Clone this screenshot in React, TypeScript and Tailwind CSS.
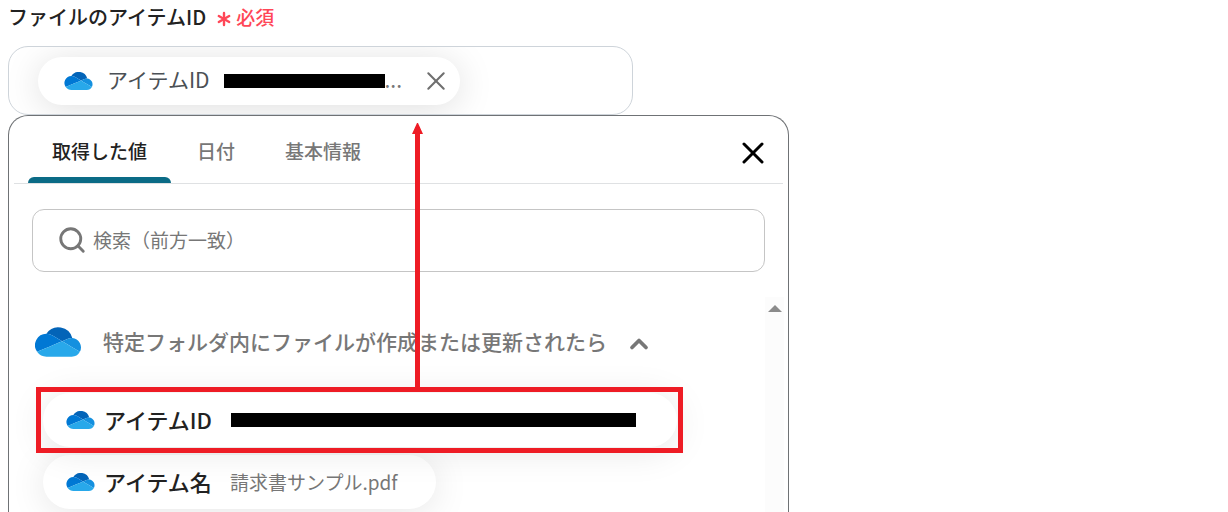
import { Asterisk, ChevronUp, Search, X } from "lucide-react";

const OneDriveIcon: React.FC<{ className: string }> = ({ className }) => (
  <svg viewBox="0 5.5 32 20.5" className={className} aria-hidden="true">
    <path fill="#0364b8" d="M12.202 11.193l6.718 4.023 4.003-1.684A6.477 6.477 0 0 1 25.5 13c.148 0 .294.007.439.016A10 10 0 0 0 7.898 10.003L8 10a7.96 7.96 0 0 1 4.202 1.193Z" />
    <path fill="#0078d4" d="M12.203 11.192A7.96 7.96 0 0 0 8 10l-.102.003A7.997 7.997 0 0 0 1.437 22.573l5.924-2.493 2.634-1.108 5.863-2.468 3.062-1.288Z" />
    <path fill="#1490df" d="M25.939 13.016A6.6 6.6 0 0 0 25.5 13a6.477 6.477 0 0 0-2.576.532l-4.004 1.684 1.161.695 3.805 2.279 1.66.994 5.677 3.4a6.5 6.5 0 0 0-5.284-9.568Z" />
    <path fill="#28a8ea" d="M25.546 19.184l-1.66-.994-3.805-2.279-1.161-.695-3.062 1.288-5.863 2.468-2.634 1.108-5.924 2.493A7.989 7.989 0 0 0 8 26h17.5a6.498 6.498 0 0 0 5.723-3.416Z" />
  </svg>
);

const tabs = [
  { label: "取得した値", active: true },
  { label: "日付", active: false },
  { label: "基本情報", active: false },
];

const SelectedChip: React.FC = () => (
  <div className="flex h-12 w-[422px] items-center rounded-full bg-white pl-[26px] pr-[13px] shadow-[0_4px_36px_rgba(0,0,0,0.13)]">
    <OneDriveIcon className="h-[18px] w-[29px] shrink-0" />
    <span className="ml-[14px] pb-[3px] text-[21px] leading-6 text-[#4b5055]">アイテムID</span>
    <span className="ml-[14px] h-[14px] w-[161px] shrink-0 bg-black" />
    <span className="pb-[3px] text-[21px] leading-6 text-[#777]">...</span>
    <button type="button" aria-label="削除" className="ml-auto">
      <X className="size-[22px] scale-[1.4] text-[#6f6f6f]" strokeWidth={1.6} />
    </button>
  </div>
);

const ItemField: React.FC = () => (
  <div>
    <div className="flex h-[46px] items-start pt-[5px]">
      <span className="text-[20px] font-medium leading-6 text-[#222]">ファイルのアイテムID</span>
      <Asterisk className="ml-[6px] mt-[2px] size-6 text-[#ff4757]" strokeWidth={2.4} />
      <span className="text-[19px] font-medium leading-6 text-[#ff4757]">必須</span>
    </div>
    <div className="flex h-[69px] max-w-[625px] items-center overflow-hidden rounded-[20px] border border-[#ced4da] pl-[29px]">
      <SelectedChip />
    </div>
  </div>
);

// Arrow pointing from the highlighted value up to the field
const Highlight: React.FC = () => (
  <div className="pointer-events-none absolute -inset-y-[6px] -left-[7px] -right-[6px] border-[5px] border-[#ee1c25]">
    <svg viewBox="0 0 11 269" className="absolute bottom-full left-[371px] h-[269px] w-[11px]" aria-hidden="true">
      <path fill="#ee1c25" d="M5 0h1l5 11H8V269H3V11H0z" />
    </svg>
  </div>
);

const Picker: React.FC = () => (
  <div className="flex min-h-0 flex-1 flex-col overflow-hidden rounded-t-[20px] border border-b-0 border-[#6f7275] bg-white px-1">
    <div className="mx-px flex h-[68px] shrink-0 items-stretch border-b border-[#dfe1e3] pl-[14px]">
      <div role="tablist" className="flex gap-[2px]">
        {tabs.map((tab) => (
          <button
            key={tab.label}
            type="button"
            role="tab"
            aria-selected={tab.active}
            className={
              tab.active
                ? "flex flex-col items-center justify-between pt-[23px] text-[#222]"
                : "flex flex-col items-center justify-between pt-[23px] text-[#777]"
            }
          >
            <span className="px-6 text-[19px] font-medium leading-6">{tab.label}</span>
            {tab.active && <span className="h-[6px] w-full rounded-t-[6px] bg-[#0b6b86]" />}
          </button>
        ))}
      </div>
      <button type="button" aria-label="閉じる" className="ml-auto mr-3 pt-[7px]">
        <X className="size-9 text-black" strokeWidth={2} />
      </button>
    </div>

    <label className="ml-[19px] mr-[19px] mt-[25px] flex h-[63px] shrink-0 items-center rounded-xl border border-[#c5c5c5] pb-px pl-6">
      <Search className="size-[30px] shrink-0 text-[#777]" strokeWidth={2.3} />
      <input
        type="text"
        aria-label="検索"
        placeholder="検索（前方一致）"
        className="ml-[6px] min-w-0 flex-1 text-[19px] leading-6 outline-none placeholder:text-[#777]"
      />
    </label>

    <div className="mt-[25px] flex min-h-0 flex-1">
      <div className="min-w-0 flex-1 pl-[22px]">
        <button type="button" className="mt-[30px] flex h-[30px] items-center">
          <OneDriveIcon className="h-[30px] w-[46px]" />
          <span className="ml-[22px] pb-[2px] text-[21px] font-medium leading-[30px] text-[#777]">
            特定フォルダ内にファイルが作成または更新されたら
          </span>
          <ChevronUp className="ml-[18px] mt-[3px] size-7 text-[#777]" strokeWidth={3.2} />
        </button>
        <div className="ml-2 mt-9 flex flex-col items-start gap-2">
          <button type="button" className="relative flex h-[54px] w-[634px] items-center rounded-full bg-white pl-[23px] shadow-[0_4px_36px_rgba(0,0,0,0.1)]">
            <OneDriveIcon className="h-[18px] w-[29px]" />
            <span className="ml-[9px] w-[109px] pb-[3px] text-left text-[22px] font-medium leading-6 text-[#222]">アイテムID</span>
            <span className="ml-[18px] h-[14px] w-[405px] bg-black" />
            <Highlight />
          </button>
          <button type="button" className="flex h-[54px] w-[393px] items-center rounded-full bg-white pl-[23px] shadow-[0_4px_36px_rgba(0,0,0,0.1)]">
            <OneDriveIcon className="h-[18px] w-[29px]" />
            <span className="ml-[9px] w-[109px] whitespace-nowrap pb-[3px] text-left text-[22px] font-medium leading-6 text-[#222]">アイテム名</span>
            <span className="ml-[17px] text-[19px] leading-6 text-[#777]">請求書サンプル.pdf</span>
          </button>
        </div>
      </div>
      <div className="flex w-[19px] shrink-0 justify-center bg-[#fcfcfc] pt-2">
        <svg viewBox="0 0 14 7" className="h-[7px] w-[14px]" aria-hidden="true">
          <path fill="#8b8b8b" d="M7 0l7 7H0z" />
        </svg>
      </div>
    </div>
  </div>
);

const App: React.FC = () => {
  return (
    <main
      lang="ja"
      className="flex h-screen flex-col overflow-hidden bg-white pl-2 font-['Noto_Sans_CJK_JP',sans-serif]"
    >
      <div className="flex min-h-0 w-full max-w-[781px] flex-1 flex-col">
        <ItemField />
        <Picker />
      </div>
    </main>
  );
};

export default App;
